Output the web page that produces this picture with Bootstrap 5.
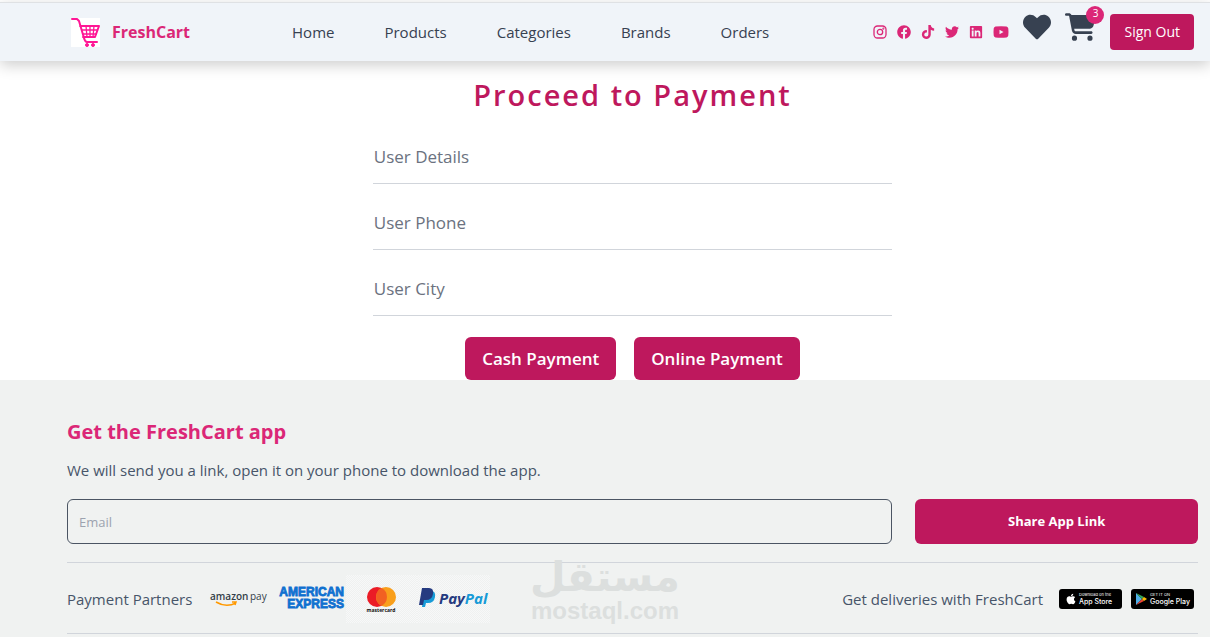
<!DOCTYPE html>
<html lang="en">
<head>
<meta charset="utf-8">
<meta name="viewport" content="width=device-width, initial-scale=1">
<title>FreshCart - Payment</title>
<link href="https://cdn.jsdelivr.net/npm/bootstrap@5.3.0/dist/css/bootstrap.min.css" rel="stylesheet">
<style>
:root { --brand: #be185d; --pink: #db2777; --ink: #374151; --line: #d1d5db; }
body { font-family: "Open Sans", "Noto Sans", sans-serif; font-size: 15px; line-height: 24px; color: #475569; background: #fff; }
.page-pad { padding-left: 67px; padding-right: 12px; }
.topbar { margin-top: 2px; height: 59px; padding: 0 16px 0 71px; background: #f0f4f9; border-top: 1px solid #dfe1e4; box-shadow: 0 4px 14px rgba(0,0,0,.2); }
.brand-name { color: var(--pink); font-size: 16px; font-weight: 700; }
.main-links { gap: 50px; margin-left: 102px; }
.main-links a { color: var(--ink); text-decoration: none; }
.socials { gap: 10px; margin-right: 14px; }
.socials a { display: flex; color: var(--pink); }
.quick { gap: 14px; margin-right: 14px; padding-bottom: 10px; }
.quick a { color: var(--ink); display: flex; }
.count { top: -7px; right: -8px; width: 18px; height: 18px; background: var(--pink); font-size: 10px; line-height: 15px; }
.btn-brand, .btn-brand:hover { background: var(--brand); color: #fff; border: 0; border-radius: 6px; }
.btn-out { font-size: 14px; line-height: 20px; padding: 8px 14px; border-radius: 4px; }
.title { color: var(--brand); font-size: 29px; font-weight: 600; line-height: 40px; letter-spacing: 2px; margin: 14px 0 27px; }
.pay-col { padding: 0 23px; }
.pay-field { margin-bottom: 24px; font-size: 17px; }
.pay-field > .form-control { border: 0; border-bottom: 1px solid var(--line); border-radius: 0; background: none; padding: 0 0 12px; height: 42px; min-height: 42px; font-size: 17px; line-height: 28px; box-shadow: none; }
.pay-field > label { padding: 0; line-height: 28px; color: #6b7280; }
.pay-actions { gap: 18px; margin-top: -3px; }
.btn-pay { font-size: 17px; font-weight: 600; line-height: 27px; padding: 8px 17px; }
.site-footer { background: #f0f2f1; padding-top: 38px; padding-bottom: 3px; }
.app-title { color: var(--pink); font-size: 20px; font-weight: 700; line-height: 28px; margin-bottom: 12px; }
.share { gap: 23px; margin: 17px 0 18px; }
.email, .email:focus { background: transparent; border: 1px solid #4b5563; border-radius: 6px; height: 45px; padding: 0 11px; font-size: 13px; }
.email::placeholder { color: #9ca3af; opacity: 1; }
.btn-share { width: 25%; font-size: 13px; font-weight: 700; }
.partners { border-top: 1px solid var(--line); border-bottom: 1px solid var(--line); height: 72px; padding-top: 2px; }
.checks { background: repeating-conic-gradient(#f7f8f8 0 25%, #eff1f0 0 50%) 0 0 / 2px 2px; }
.store-gap { margin-left: 9px; margin-right: 4px; }
.watermark { bottom: 8px; color: #dcdfde; pointer-events: none; }
</style>
</head>
<body>
<nav class="topbar d-flex align-items-center">
  <a href="#" class="d-flex align-items-center text-decoration-none">
    <svg width="29" height="29" viewBox="0 0 29 29" fill="none" stroke="#ff1695" aria-hidden="true"><path fill="#fff" stroke="none" d="M0 0h29v29H0z"/><path stroke-width="2" stroke-linecap="round" stroke-linejoin="round" d="M1 1h5l2 2 5 17q1 4 3 4h10M9 8h19l-4 11H12"/><path stroke-width="1.300" d="M10 12h17M11 16h15M15 8l1 11M19 8v11M23 8l-1 11"/><circle cx="16" cy="27" r="1.500" fill="#ff1695"/><circle cx="22" cy="27" r="1.500" fill="#ff1695"/></svg>
    <span class="brand-name ms-2 ps-1">FreshCart</span>
  </a>
  <div class="main-links d-flex">
    <a href="#">Home</a><a href="#">Products</a><a href="#">Categories</a><a href="#">Brands</a><a href="#">Orders</a>
  </div>
  <div class="socials d-flex align-items-center ms-auto">
    <a href="#" aria-label="Instagram"><svg width="14" height="14" viewBox="0 0 14 14" fill="none" stroke="currentColor" stroke-width="1.300"><rect x="1" y="1" width="12" height="12" rx="3.500"/><circle cx="7" cy="7" r="2.700"/><circle cx="10.400" cy="3.600" r=".4"/></svg></a>
    <a href="#" aria-label="Facebook"><svg width="14" height="14" viewBox="0 0 512 512" fill="currentColor"><path d="M504 256C504 119 393 8 256 8S8 119 8 256c0 123.780 90.690 226.380 209.250 245V327.690h-63V256h63v-54.640c0-62.150 37-96.480 93.670-96.480 27.140 0 55.520 4.840 55.520 4.840v61h-31.280c-30.800 0-40.410 19.120-40.410 38.730V256h68.780l-11 71.690h-57.780V501C413.310 482.380 504 379.780 504 256z"/></svg></a>
    <a href="#" aria-label="TikTok"><svg width="14" height="14" viewBox="-32 0 512 512" fill="currentColor"><path d="M448,209.910a210.060,210.060,0,0,1-122.770-39.250V349.380A162.550,162.550,0,1,1,185,188.310V278.200a74.620,74.620,0,1,0,52.230,71.180V0l88,0a121.180,121.180,0,0,0,1.860,22.170h0A122.180,122.180,0,0,0,381,102.390a121.430,121.430,0,0,0,67,20.140Z"/></svg></a>
    <a href="#" aria-label="Twitter"><svg width="14" height="14" viewBox="0 0 512 512" fill="currentColor"><path d="M459.370 151.716c.325 4.548.325 9.097.325 13.645 0 138.720-105.583 298.558-298.558 298.558-59.452 0-114.680-17.219-161.137-47.106 8.447.974 16.568 1.299 25.340 1.299 49.055 0 94.213-16.568 130.274-44.832-46.132-.975-84.792-31.188-98.112-72.772 6.498.974 12.995 1.624 19.818 1.624 9.421 0 18.843-1.300 27.614-3.573-48.081-9.747-84.143-51.980-84.143-102.985v-1.299c13.969 7.797 30.214 12.670 47.431 13.319-28.264-18.843-46.781-51.005-46.781-87.391 0-19.492 5.197-37.360 14.294-52.954 51.655 63.675 129.300 105.258 216.365 109.807-1.624-7.797-2.599-15.918-2.599-24.040 0-57.828 46.782-104.934 104.934-104.934 30.213 0 57.502 12.670 76.670 33.137 23.715-4.548 46.456-13.320 66.599-25.340-7.798 24.366-24.366 44.833-46.132 57.827 21.117-2.273 41.584-8.122 60.426-16.243-14.292 20.791-32.161 39.308-52.628 54.253z"/></svg></a>
    <a href="#" aria-label="LinkedIn"><svg width="14" height="14" viewBox="-32 0 512 512" fill="currentColor"><path d="M416 32H31.900C14.300 32 0 46.500 0 64.300v383.400C0 465.500 14.300 480 31.900 480H416c17.600 0 32-14.500 32-32.300V64.300c0-17.800-14.400-32.300-32-32.300zM135.400 416H69V202.200h66.500V416zm-33.200-243c-21.300 0-38.500-17.300-38.500-38.500S80.900 96 102.200 96c21.200 0 38.500 17.300 38.500 38.500 0 21.300-17.200 38.500-38.500 38.500zm282.100 243h-66.400V312c0-24.800-.5-56.700-34.500-56.700-34.600 0-39.900 27-39.900 54.900V416h-66.400V202.200h63.700v29.200h.9c8.900-16.800 30.600-34.500 62.900-34.500 67.200 0 79.700 44.300 79.700 101.900V416z"/></svg></a>
    <a href="#" aria-label="YouTube"><svg width="16" height="14" viewBox="0 0 16 14" fill="currentColor"><path fill-rule="evenodd" d="M2.500 1.600Q8 .9 13.500 1.600 15 2 15.300 3.500 15.700 7 15.300 10.500 15 12 13.500 12.400 8 13.100 2.500 12.400 1 12 .7 10.500.3 7 .7 3.500 1 2 2.500 1.600ZM6.500 4.700v4.600L10.500 7Z"/></svg></a>
  </div>
  <div class="quick d-flex align-items-center">
    <a href="#" aria-label="Wishlist"><svg width="28" height="28" viewBox="0 0 512 512" fill="currentColor"><path d="M462.300 62.600C407.500 15.900 326 24.300 275.700 76.200L256 96.500l-19.700-20.300C186.100 24.300 104.500 15.900 49.700 62.600c-62.800 53.600-66.100 149.800-9.900 207.900l193.500 199.800c12.500 12.900 32.800 12.900 45.300 0l193.500-199.800c56.300-58.100 53-154.300-9.800-207.900z"/></svg></a>
    <a href="#" class="position-relative" aria-label="Cart"><svg width="31" height="28" viewBox="0 0 576 512" fill="currentColor"><path d="M0 24C0 10.700 10.700 0 24 0H69.500c22 0 41.500 12.800 50.600 32h411c26.300 0 45.500 25 38.600 50.400l-41 152.300c-8.500 31.400-37 53.300-69.500 53.300H170.700l5.400 28.500c2.200 11.300 12.100 19.500 23.600 19.500H488c13.300 0 24 10.700 24 24s-10.700 24-24 24H199.700c-34.600 0-64.300-24.600-70.700-58.500L77.400 54.500c-.7-3.800-4-6.500-7.900-6.500H24C10.700 48 0 37.300 0 24zM128 464a48 48 0 1 1 96 0 48 48 0 1 1 -96 0zm336-48a48 48 0 1 1 0 96 48 48 0 1 1 0-96z"/></svg><span class="count position-absolute rounded-circle text-white text-center">3</span></a>
  </div>
  <button type="button" class="btn btn-brand btn-out">Sign Out</button>
</nav>

<main class="page-pad">
  <h1 class="title text-center">Proceed to Payment</h1>
  <form class="pay-col col-6 mx-auto">
    <div class="form-floating pay-field">
      <input id="details" class="form-control" placeholder=" ">
      <label for="details">User Details</label>
    </div>
    <div class="form-floating pay-field">
      <input id="phone" type="tel" class="form-control" placeholder=" ">
      <label for="phone">User Phone</label>
    </div>
    <div class="form-floating pay-field">
      <input id="city" class="form-control" placeholder=" ">
      <label for="city">User City</label>
    </div>
    <div class="pay-actions d-flex justify-content-center">
      <button type="button" class="btn btn-brand btn-pay">Cash Payment</button>
      <button type="button" class="btn btn-brand btn-pay">Online Payment</button>
    </div>
  </form>
</main>

<footer class="site-footer page-pad position-relative">
  <h2 class="app-title">Get the FreshCart app</h2>
  <p class="mb-0">We will send you a link, open it on your phone to download the app.</p>
  <form class="share d-flex">
    <input type="email" class="form-control email shadow-none flex-fill w-auto" placeholder="Email" aria-label="Email">
    <button type="button" class="btn btn-brand btn-share">Share App Link</button>
  </form>
  <div class="partners d-flex align-items-center">
    <span>Payment Partners</span>
    <div class="d-flex align-items-center ms-3">
      <svg width="66" height="48" viewBox="0 0 66 48" role="img" aria-label="Amazon Pay"><g font-family="Open Sans" font-size="10" fill="#333e48"><text x="2" y="25" font-weight="600">amazon</text><text x="42" y="25">pay</text></g><path d="M8 27q10 6 20 1M24 27l4 0-1 3" fill="none" stroke="#f90" stroke-width="1.500"/></svg>
      <svg width="72" height="48" viewBox="0 0 72 48" role="img" aria-label="American Express"><g font-family="Liberation Sans" font-size="12" font-weight="700" fill="#0f70d0" stroke="#0f70d0" stroke-width=".8" text-anchor="end"><text x="70" y="21">AMERICAN</text><text x="70" y="33">EXPRESS</text></g></svg>
      <svg class="checks" width="71" height="48" viewBox="0 0 71 48" role="img" aria-label="Mastercard"><circle cx="31" cy="22" r="10" fill="#eb1c26"/><circle cx="40" cy="22" r="10" fill="#f99f1b"/><path d="M35.500 13.100a10 10 0 0 1 0 17.800 10 10 0 0 1 0-17.800" fill="#f26122"/><text x="35" y="37" text-anchor="middle" font-family="Open Sans" font-size="5" font-weight="700" fill="#111">mastercard</text></svg>
      <svg class="checks" width="73" height="48" viewBox="0 0 73 48" role="img" aria-label="PayPal"><path d="M7 16h7q5 0 4 6t-7 6h-2l-1 4H5z" fill="#179bd7"/><path d="M5 13h7q5 0 4 6t-7 6H7l-1 5H2z" fill="#253b80"/><text x="22" y="29" font-family="Open Sans" font-size="15" font-style="italic" font-weight="700" fill="#253b80">Pay<tspan fill="#179bd7">Pal</tspan></text></svg>
    </div>
    <span class="ms-auto">Get deliveries with FreshCart</span>
    <a href="#" class="d-flex ms-3" aria-label="App Store"><svg width="63" height="20" viewBox="0 0 63 20"><rect width="63" height="20" rx="3"/><svg x="7" y="4" width="10" height="12" viewBox="0 0 384 512"><path fill="#fff" d="M318.700 268.700c-.2-36.700 16.400-64.400 50-84.800-18.800-26.900-47.200-41.700-84.700-44.600-35.500-2.800-74.300 20.700-88.500 20.700-15 0-49.400-19.700-76.400-19.700C63.300 141.200 4 184.800 4 273.500q0 39.300 14.400 81.200c12.800 36.700 59 126.700 107.200 125.200 25.200-.6 43-17.900 75.800-17.900 31.800 0 48.300 17.900 76.400 17.900 48.600-.7 90.400-82.500 102.600-119.300-65.200-30.700-61.700-90-61.700-91.900zm-56.600-164.200c27.300-32.400 24.800-61.900 24-72.500-24.100 1.400-52 16.400-67.900 34.900-17.500 19.800-27.800 44.300-25.600 71.900 26.100 2 49.900-11.400 69.500-34.300z"/></svg><g fill="#fff" font-family="Inter"><text x="20" y="7" font-size="4">Download on the</text><text x="20" y="15" font-size="7" font-weight="500">App Store</text></g></svg></a>
    <a href="#" class="d-flex store-gap" aria-label="Google Play"><svg width="63" height="20" viewBox="0 0 63 20"><rect width="63" height="20" rx="3"/><path d="M5 4l6 6-6 6z" fill="#4fb0e8"/><path d="M5 4l8 4-2 2z" fill="#34a853"/><path d="M5 16l8-4-2-2z" fill="#ea4335"/><path d="M13 8l3 2-3 2-2-2z" fill="#fbbc04"/><g fill="#fff" font-family="Inter"><text x="19" y="7" font-size="4">GET IT ON</text><text x="19" y="15" font-size="7" font-weight="500">Google Play</text></g></svg></a>
  </div>
  <div class="watermark position-absolute start-50 translate-middle-x" aria-hidden="true">
    <svg width="160" height="74" viewBox="0 0 160 74" fill="currentColor"><text x="80" y="36" direction="rtl" text-anchor="middle" font-family="DejaVu Sans" font-weight="700" font-size="41">مستقل</text><text x="80" y="64" text-anchor="middle" font-family="Liberation Sans" font-weight="700" font-size="24">mostaql.com</text></svg>
  </div>
</footer>
<script src="https://cdn.jsdelivr.net/npm/bootstrap@5.3.0/dist/js/bootstrap.bundle.min.js"></script>
</body>
</html>
